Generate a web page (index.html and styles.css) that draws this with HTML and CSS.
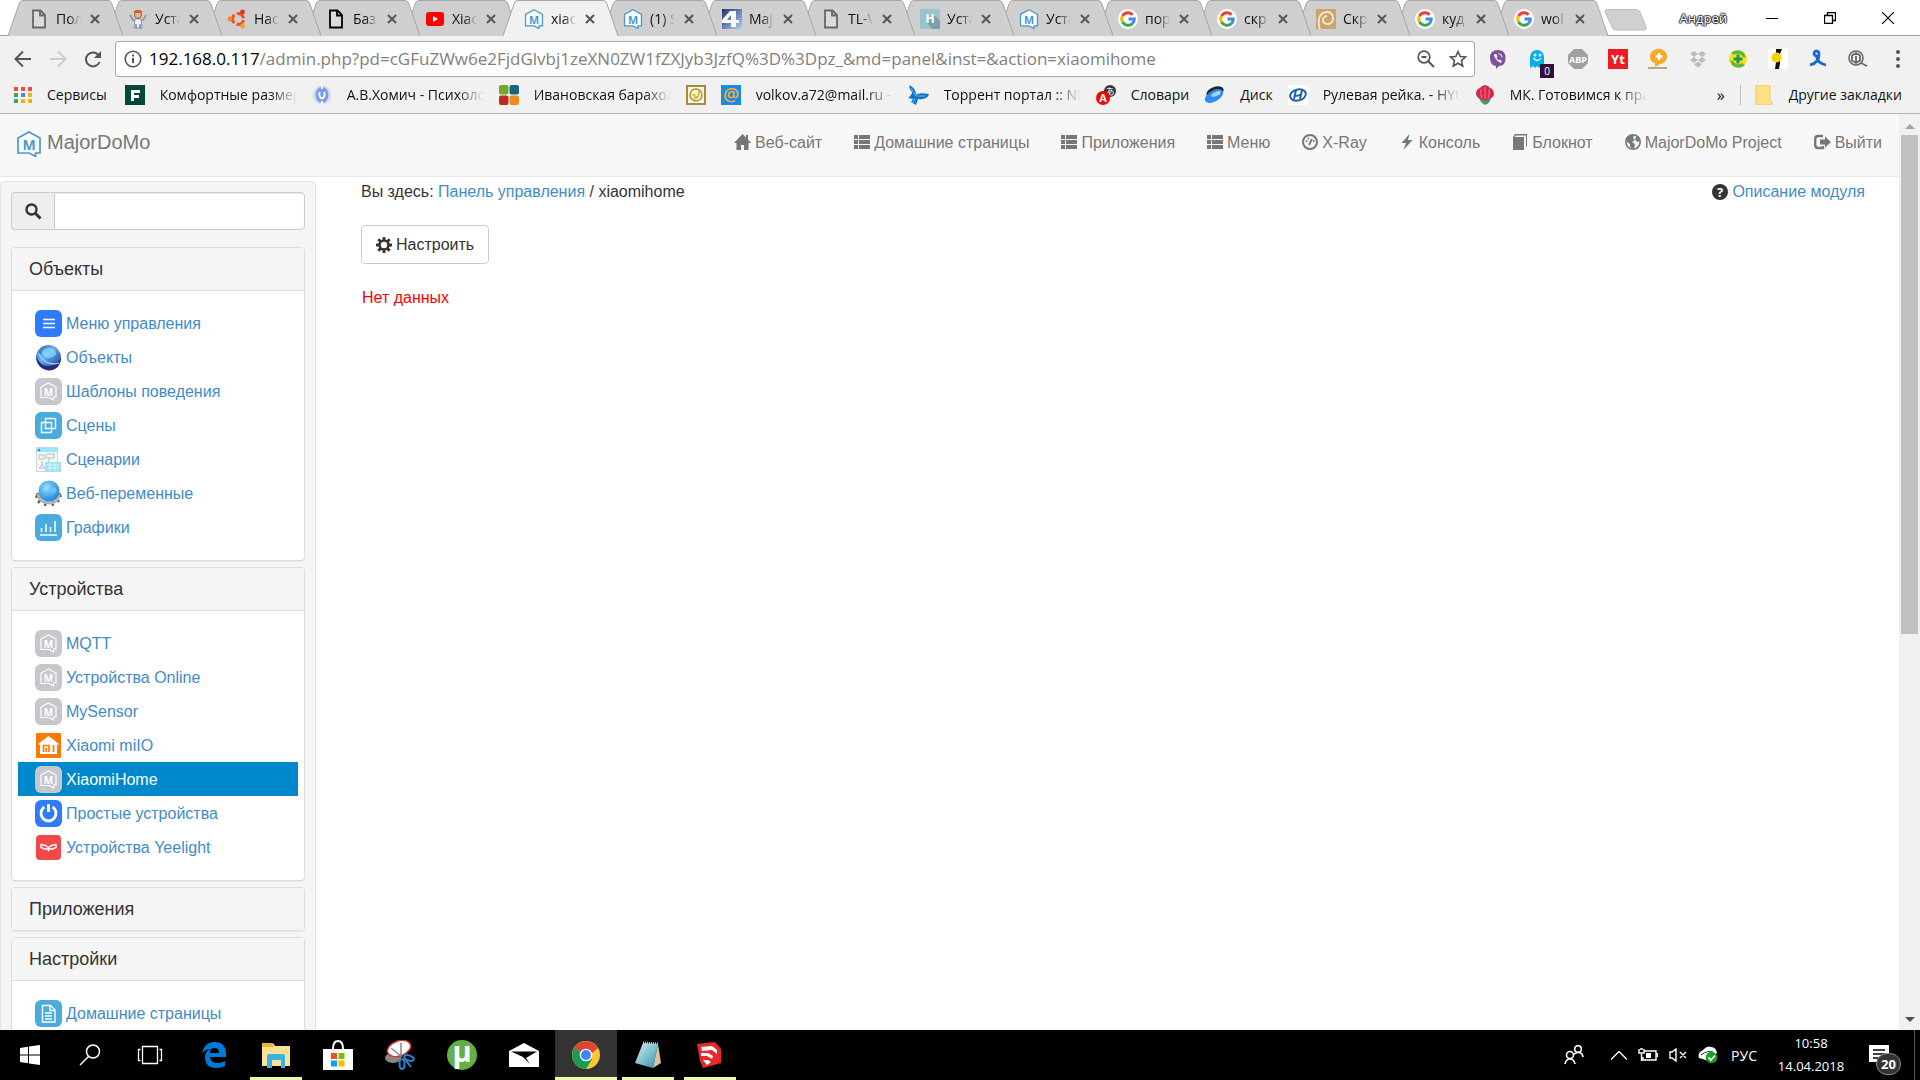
FILE: index.html
```html
<!DOCTYPE html>
<html lang="ru">
<head>
<meta charset="utf-8">
<title>xiaomihome</title>
<link rel="stylesheet" href="styles.css">
</head>
<body>
<svg class="defs" width="0" height="0" aria-hidden="true">
  <defs>
    <linearGradient id="g-ball" x1="0" y1="0" x2="1" y2="1"><stop offset="0" stop-color="#2a4fa0"/><stop offset=".4" stop-color="#5fb4f0"/><stop offset="1" stop-color="#1b2a8a"/></linearGradient>
    <radialGradient id="g-globe" cx=".4" cy=".35" r=".7"><stop offset="0" stop-color="#8fdcff"/><stop offset="1" stop-color="#1583dc"/></radialGradient>
    <linearGradient id="g-pad" x1="0" y1="0" x2="1" y2="1"><stop offset="0" stop-color="#d8f0f5"/><stop offset="1" stop-color="#2f93a8"/></linearGradient>
    <linearGradient id="g-four" x1="0" y1="0" x2="1" y2="1"><stop offset="0" stop-color="#1a3472"/><stop offset="1" stop-color="#b5d0f2"/></linearGradient>
  </defs>
  <symbol id="tab-shape" viewBox="0 0 115 36"><path d="M0 36 11 4Q12 .5 15 .5H100Q103 .5 104 4L115 36"/></symbol>
  <symbol id="cross" viewBox="0 0 10 10"><path d="M1 1l8 8M9 1L1 9" fill="none" stroke="currentColor" stroke-width="2"/></symbol>
  <symbol id="doc" viewBox="0 0 20 20"><path d="M4 1.500H11.500L16 6V18.500H4zM11 1.500V6.500H16" fill="#fff" fill-opacity=".25" stroke="currentColor" stroke-width="1.800"/></symbol>
  <symbol id="mdm" viewBox="0 0 24 26"><path d="M12 1 23 7V22H18.500V25.300L12 22H1V7Z" fill="#fff" stroke="#4a98d3" stroke-width="1.700"/><text x="12" y="19" text-anchor="middle" font-size="14" font-weight="700" fill="#4a98d3">M</text></symbol>
  <symbol id="mdm-tile" viewBox="0 0 27 27"><rect width="27" height="27" rx="6" fill="#c6c6cd"/><path d="M13.500 5 21 9V19H18.500V22L14 19.500H6V9Z" fill="none" stroke="#fff" stroke-width="1.200"/><text x="13.500" y="17.500" text-anchor="middle" font-size="10" font-weight="700" fill="#fff">M</text></symbol>
  <symbol id="google" viewBox="0 0 20 20"><circle cx="10" cy="10" r="10" fill="#fff"/><g fill="none" stroke-width="3"><path d="M14.600 5.700A6.300 6.300 0 0 0 4.500 7" stroke="#ea4335"/><path d="M4.500 7A6.300 6.300 0 0 0 4.500 13" stroke="#fbbc05"/><path d="M4.500 13A6.300 6.300 0 0 0 14.300 14.600" stroke="#34a853"/><path d="M14.300 14.600A6.300 6.300 0 0 0 16.300 10H10.500" stroke="#4285f4"/></g></symbol>
  <symbol id="man" viewBox="0 0 20 20"><path d="M2 6l3 5 3 1M18 6l-3 5-3 1" stroke="#8f9aa8" stroke-width="1.800" fill="none"/><path d="M7 10h6l1 9H6z" fill="#eef2f8" stroke="#7a86a8" stroke-width=".8"/><circle cx="10" cy="6" r="3.500" fill="#e9b38c" stroke="#7a4a32" stroke-width=".8"/><path d="M5 3l3-2 4 0 3 2-2 1H7z" fill="#d2622a"/><path d="M8 19v-4M12 19v-4" stroke="#384f93"/></symbol>
  <symbol id="ubuntu" viewBox="0 0 20 20"><circle cx="11" cy="10" r="5.500" fill="none" stroke="#e95420" stroke-width="3" stroke-dasharray="9 2.500" stroke-dashoffset="-1"/><circle cx="3" cy="10" r="2.400" fill="#ef8b26"/><circle cx="15.500" cy="3" r="2.400" fill="#d93a1d"/><circle cx="15.500" cy="17" r="2.400" fill="#f0a030"/></symbol>
  <symbol id="youtube" viewBox="0 0 20 20"><rect x="1" y="3" width="18" height="14" rx="3" fill="#f00"/><path d="M8 7v6l5-3z" fill="#fff"/></symbol>
  <symbol id="four" viewBox="0 0 20 20"><rect width="20" height="20" fill="url(#g-four)"/><path d="M0 11 8 2h6v9h3v3h-3v4H9v-4H0zM9 6l-4 5h4z" fill="#fff"/></symbol>
  <symbol id="hab" viewBox="0 0 20 20"><rect width="20" height="20" fill="#9bc3cf"/><path d="M14 6l6 6v8H12L7 14z" fill="#7a9eaa"/><text x="10" y="14" text-anchor="middle" font-size="12" font-weight="700" fill="#fff">H</text></symbol>
  <symbol id="swirl" viewBox="0 0 20 20"><rect width="20" height="20" fill="#c9a46c"/><path d="M4 20C1 12 3 3 11 3s8 12 1 12-6-8-1-8" fill="none" stroke="#f7ead2" stroke-width="1.800"/></symbol>
  <symbol id="list" viewBox="0 0 16 16"><path d="M0 1h4v4H0zM5 1h11v4H5zM0 6h4v4H0zM5 6h11v4H5zM0 11h4v4H0zM5 11h11v4H5z" fill="currentColor"/></symbol>
</svg>

<header class="browser">
  <div class="tab-row">
    <nav class="tabs" aria-label="Вкладки">
      <div class="tab"><svg class="tab-bg"><use href="#tab-shape"/></svg><svg class="fav grey"><use href="#doc"/></svg><span class="tab-title">Пол</span><button class="tab-close" aria-label="Закрыть"><svg><use href="#cross"/></svg></button></div>
      <div class="tab"><svg class="tab-bg"><use href="#tab-shape"/></svg><svg class="fav"><use href="#man"/></svg><span class="tab-title">Уста</span><button class="tab-close" aria-label="Закрыть"><svg><use href="#cross"/></svg></button></div>
      <div class="tab"><svg class="tab-bg"><use href="#tab-shape"/></svg><svg class="fav"><use href="#ubuntu"/></svg><span class="tab-title">Нас</span><button class="tab-close" aria-label="Закрыть"><svg><use href="#cross"/></svg></button></div>
      <div class="tab"><svg class="tab-bg"><use href="#tab-shape"/></svg><svg class="fav solid"><use href="#doc"/></svg><span class="tab-title">Баз</span><button class="tab-close" aria-label="Закрыть"><svg><use href="#cross"/></svg></button></div>
      <div class="tab"><svg class="tab-bg"><use href="#tab-shape"/></svg><svg class="fav"><use href="#youtube"/></svg><span class="tab-title">Xiao</span><button class="tab-close" aria-label="Закрыть"><svg><use href="#cross"/></svg></button></div>
      <div class="tab active"><svg class="tab-bg"><use href="#tab-shape"/></svg><svg class="fav"><use href="#mdm"/></svg><span class="tab-title">xiao</span><button class="tab-close" aria-label="Закрыть"><svg><use href="#cross"/></svg></button></div>
      <div class="tab"><svg class="tab-bg"><use href="#tab-shape"/></svg><svg class="fav"><use href="#mdm"/></svg><span class="tab-title">(1) S</span><button class="tab-close" aria-label="Закрыть"><svg><use href="#cross"/></svg></button></div>
      <div class="tab"><svg class="tab-bg"><use href="#tab-shape"/></svg><svg class="fav"><use href="#four"/></svg><span class="tab-title">Maj</span><button class="tab-close" aria-label="Закрыть"><svg><use href="#cross"/></svg></button></div>
      <div class="tab"><svg class="tab-bg"><use href="#tab-shape"/></svg><svg class="fav grey"><use href="#doc"/></svg><span class="tab-title">TL-V</span><button class="tab-close" aria-label="Закрыть"><svg><use href="#cross"/></svg></button></div>
      <div class="tab"><svg class="tab-bg"><use href="#tab-shape"/></svg><svg class="fav"><use href="#hab"/></svg><span class="tab-title">Уста</span><button class="tab-close" aria-label="Закрыть"><svg><use href="#cross"/></svg></button></div>
      <div class="tab"><svg class="tab-bg"><use href="#tab-shape"/></svg><svg class="fav"><use href="#mdm"/></svg><span class="tab-title">Уста</span><button class="tab-close" aria-label="Закрыть"><svg><use href="#cross"/></svg></button></div>
      <div class="tab"><svg class="tab-bg"><use href="#tab-shape"/></svg><svg class="fav"><use href="#google"/></svg><span class="tab-title">пор</span><button class="tab-close" aria-label="Закрыть"><svg><use href="#cross"/></svg></button></div>
      <div class="tab"><svg class="tab-bg"><use href="#tab-shape"/></svg><svg class="fav"><use href="#google"/></svg><span class="tab-title">скр</span><button class="tab-close" aria-label="Закрыть"><svg><use href="#cross"/></svg></button></div>
      <div class="tab"><svg class="tab-bg"><use href="#tab-shape"/></svg><svg class="fav"><use href="#swirl"/></svg><span class="tab-title">Скр</span><button class="tab-close" aria-label="Закрыть"><svg><use href="#cross"/></svg></button></div>
      <div class="tab"><svg class="tab-bg"><use href="#tab-shape"/></svg><svg class="fav"><use href="#google"/></svg><span class="tab-title">куд</span><button class="tab-close" aria-label="Закрыть"><svg><use href="#cross"/></svg></button></div>
      <div class="tab"><svg class="tab-bg"><use href="#tab-shape"/></svg><svg class="fav"><use href="#google"/></svg><span class="tab-title">wol</span><button class="tab-close" aria-label="Закрыть"><svg><use href="#cross"/></svg></button></div>
    </nav>
    <button class="new-tab" aria-label="Новая вкладка"><svg width="44" height="22" viewBox="0 0 44 22"><path d="M4 .5H32Q35 .5 36 3L42 18Q43 21 40 21H12Q9 21 8 18L1 3Q.5 .5 4 .5z" fill="#d0d0d0" stroke="#bcbcbc"/></svg></button>
    <div class="window-controls">
      <span class="profile">Андрей</span>
      <button aria-label="Свернуть"><svg width="12" height="12"><path d="M0 6.500h12" stroke="#000"/></svg></button>
      <button aria-label="Развернуть"><svg width="12" height="12"><path d="M.5 3.500h8v8h-8zM3.500 3V.5h8v8H9" fill="none" stroke="#000" stroke-width="1.300"/></svg></button>
      <button aria-label="Закрыть окно"><svg width="12" height="12"><path d="M0 0l12 12M12 0L0 12" stroke="#000" stroke-width="1.200"/></svg></button>
    </div>
  </div>

  <div class="toolbar">
    <button class="tool" aria-label="Назад"><svg width="18" height="18"><path d="M17 9H2M9 1.500L1.500 9 9 16.500" fill="none" stroke="#555" stroke-width="2"/></svg></button>
    <button class="tool" aria-label="Вперёд"><svg width="18" height="18"><path d="M1 9h15M9 1.500L16.500 9 9 16.500" fill="none" stroke="#ccc" stroke-width="2"/></svg></button>
    <button class="tool" aria-label="Обновить"><svg width="18" height="18"><path d="M15.500 12A7 7 0 1 1 14 4.500" fill="none" stroke="#555" stroke-width="2"/><path d="M17 1v7h-7z" fill="#555"/></svg></button>
    <div class="omnibox">
      <svg width="18" height="18"><circle cx="9" cy="9" r="7.800" fill="none" stroke="#555" stroke-width="1.600"/><path d="M9 8v5M9 4.500v2" stroke="#555" stroke-width="2"/></svg>
      <label class="host" for="url">192.168.0.117</label>
      <input id="url" class="url" type="text" value="/admin.php?pd=cGFuZWw6e2FjdGlvbj1zeXN0ZW1fZXJyb3JzfQ%3D%3Dpz_&amp;md=panel&amp;inst=&amp;action=xiaomihome">
      <button aria-label="Масштаб"><svg width="18" height="18"><circle cx="7" cy="7" r="5.800" fill="none" stroke="#555" stroke-width="1.700"/><path d="M4.500 7h5M11 11l6 6" stroke="#555" stroke-width="2"/></svg></button>
      <button aria-label="Добавить в закладки"><svg width="18" height="18"><path d="M9 1.500l2.200 5 5.300.5-4 3.600 1.200 5.400L9 13.200 4.300 16l1.200-5.400-4-3.600 5.300-.5z" fill="none" stroke="#555" stroke-width="1.600"/></svg></button>
    </div>
    <div class="extensions">
      <button aria-label="Viber"><svg width="20" height="20"><path d="M10 1q7.500 0 7.500 8T11 17l-3 3v-3Q2 16 2 9q0-8 8-8z" fill="#7b519d"/><path d="M6.500 5q-1 1.500 1 4.500t5 4.500l1.500-1.500-2-2-1.200.8q-1.500-.8-2.300-2.600l1-1-1.300-2.700z" fill="#fff"/><path d="M10.500 4.500q3.500.5 3.500 4" fill="none" stroke="#fff"/></svg></button>
      <button class="ghost" aria-label="Ghostery"><svg width="20" height="20"><path d="M2 19V8a7 7 0 0 1 14 0v11l-3-2-2 2-2-2-2 2-2-2z" fill="#00aeef"/><circle cx="7" cy="6" r="1.500" fill="#fff"/><circle cx="12" cy="6" r="1.500" fill="#fff"/><path d="M5.500 9q4 5 7.500 0" stroke="#fff" fill="none" stroke-width="1.300"/></svg><span class="count">0</span></button>
      <button aria-label="Adblock Plus"><svg width="20" height="20"><path d="M6 0h8l6 6v8l-6 6H6l-6-6V6z" fill="#a0a0a0"/><text x="10" y="13.500" text-anchor="middle" font-size="9" font-weight="700" fill="#fff">ABP</text></svg></button>
      <button aria-label="Yt"><svg width="20" height="20"><path d="M0 0h20v20H0z" fill="#ed1c24"/><text x="10" y="15" text-anchor="middle" font-size="13" font-weight="700" fill="#fff">Yt</text></svg></button>
      <button aria-label="Сообщения"><svg width="20" height="20"><path d="M0 19h19" stroke="#b08b4e" stroke-width="1.500"/><path d="M10 0a8 7.500 0 0 1 2 15l-5 3 0-3.500A8 7.500 0 0 1 10 0z" fill="#fba92a"/><path d="M11 4v7M7.500 7.500h7" stroke="#fff" stroke-width="2.400"/></svg></button>
      <button aria-label="Dropbox"><svg width="20" height="20"><path d="M6 2l4 3-4 3-4-3zM14 2l4 3-4 3-4-3zM6 8l4 3-4 3-4-3zM14 8l4 3-4 3-4-3zM10 12.500l4 3-4 3-4-3z" fill="#bdbdbd"/></svg></button>
      <button aria-label="Savefrom"><svg width="20" height="20"><circle cx="10" cy="10" r="9" fill="#ffe11b"/><path d="M3 4a9 9 0 0 1 13 0l2 5-3-1a6 6 0 0 0-9-2zM17 16a9 9 0 0 1-13 0l-2-5 3 1a6 6 0 0 0 9 2z" fill="#58b947"/><path d="M10 5.500v9M5.500 10h9" stroke="#219653" stroke-width="3"/></svg></button>
      <button aria-label="Часы"><svg width="20" height="20"><path d="M0 0h20v20H0z" fill="#fff"/><path d="M8 0h6l-2 5v9l-1 6H7l1-7z" fill="#111"/><circle cx="8.500" cy="8.500" r="5" fill="#ffd000"/></svg></button>
      <button aria-label="Лента"><svg width="20" height="20"><path d="M2 16q9-2 9-11a2.500 2.500 0 1 0-2.500 2Q9 14 18 16" fill="none" stroke="#1769d2" stroke-width="2.800"/></svg></button>
      <button aria-label="Поиск"><svg width="20" height="20"><circle cx="8" cy="9" r="7" fill="none" stroke="#666" stroke-width="1.600"/><path d="M8 4l4 2.500v5L8 14l-4-2.500v-5zM8 7v7M13 14l6 3" fill="none" stroke="#666" stroke-width="1.800"/></svg></button>
      <button aria-label="Меню"><svg width="20" height="20"><circle cx="10" cy="3" r="2" fill="#555"/><circle cx="10" cy="10" r="2" fill="#555"/><circle cx="10" cy="17" r="2" fill="#555"/></svg></button>
    </div>
  </div>

  <nav class="bookmarks" aria-label="Закладки">
    <a href="#" class="apps"><svg width="18" height="20"><path d="M0 2h4v4H0z M7 2h4v4H7z M14 2h4v4h-4z" fill="#f04a43"/><path d="M0 8h4v4H0zM0 14h4v4H0z" fill="#3aa757"/><path d="M7 8h4v4H7z" fill="#4285f4"/><path d="M7 14h4v4H7zM14 8h4v4h-4zM14 14h4v4h-4z" fill="#f5b400"/></svg><span>Сервисы</span></a>
    <a href="#"><svg width="20" height="20"><path d="M0 0h20v20H0z" fill="#00493a"/><path d="M6 5h9v3H9v2h5v3H9v3H6z" fill="#fff"/></svg><span class="fade">Комфортные размеры</span></a>
    <a href="#"><svg width="20" height="20"><circle cx="10" cy="10" r="9.500" fill="#dcdcec"/><ellipse cx="10" cy="10" rx="6.500" ry="8" fill="#7b9ce8"/><path d="M10 0v4M10 16v4M7.500 7v4q2.500 5 5 0V7" stroke="#fff" fill="none" stroke-width="1.800"/></svg><span class="fade">А.В.Хомич - Психолог</span></a>
    <a href="#"><svg width="20" height="20"><rect width="9.500" height="9.500" rx="2" fill="#77a827"/><rect x="10.500" width="9.500" height="9.500" rx="2" fill="#17657f"/><rect y="10.500" width="9.500" height="9.500" rx="2" fill="#bc2a23"/><rect x="10.500" y="10.500" width="9.500" height="9.500" rx="2" fill="#ea8c15"/></svg><span class="fade">Ивановская барахолка</span></a>
    <a href="#" aria-label="Монета"><svg width="20" height="20"><path d="M1 1h18v18H1z" fill="#fff8e0" stroke="#a88a3c" stroke-width="2"/><circle cx="10" cy="10" r="6" fill="none" stroke="#ab924b" stroke-width="1.500"/><path d="M7 14q7-1 6-8M6 9l6 4" stroke="#e3bd25" stroke-width="2" fill="none"/></svg></a>
    <a href="#"><svg width="20" height="20"><path d="M0 0h20v20H0z" fill="#168de2"/><text x="10" y="16" text-anchor="middle" font-size="18" font-weight="600" fill="#ffa930">@</text></svg><span class="fade">volkov.a72@mail.ru - Почта</span></a>
    <a href="#"><svg width="21" height="20"><path d="M1 0q7 3 7 10Q10 7 21 9q-1 6-11 5l-2 6-5-3 2-3-5-1q4-3 4-6-3-3-3-7z" fill="#1373ca"/><path d="M3 3l5 8 9 0M7 13l-2 5" stroke="#40c8f4" fill="none"/></svg><span class="fade">Торрент портал :: NNM</span></a>
    <a href="#"><svg width="20" height="20"><circle cx="14" cy="6" r="6" fill="#333"/><text x="14" y="10" text-anchor="middle" font-size="9" fill="#fff">あ</text><circle cx="7" cy="13" r="7" fill="#f00"/><text x="7" y="17" text-anchor="middle" font-size="11" font-weight="700" fill="#fff">A</text></svg><span>Словари</span></a>
    <a href="#"><svg width="21" height="20"><ellipse cx="11" cy="7" rx="9" ry="5" transform="rotate(-20 11 7)" fill="#222"/><ellipse cx="10" cy="11" rx="10" ry="5.500" transform="rotate(-30 10 11)" fill="#2c8cf4"/><ellipse cx="12" cy="9" rx="5" ry="2" transform="rotate(-25 12 9)" fill="#a6d6ff"/></svg><span>Диск</span></a>
    <a href="#"><svg width="20" height="20"><path d="M0 0h20v20H0z" fill="#fff"/><ellipse cx="10" cy="10" rx="8" ry="5.500" transform="rotate(-15 10 10)" fill="none" stroke="#1f62a8" stroke-width="2"/><path d="M8 5l-2 9M14 5l-2 9M6.500 11q4 0 7-2" fill="none" stroke="#1f62a8" stroke-width="2"/></svg><span class="fade">Рулевая рейка. - HYUN</span></a>
    <a href="#"><svg width="20" height="20"><path d="M4 11h12q0 7-6 9-6-3-6-9z" fill="#459675"/><path d="M10 0q4 1 5 3 4 1 4 7-2 4-6 4l-3 2-3-2q-5 0-6-5 0-5 4-6 1-2 5-3z" fill="#d5284b"/><path d="M6 4q-1 5 1 9M10 2v12M14 4q1 5-1 9" stroke="#e87a8c" fill="none"/></svg><span class="fade">МК. Готовимся к празднику</span></a>
    <button class="more" aria-label="Ещё закладки">»</button>
    <a href="#" class="other"><svg width="20" height="20"><path d="M2 0h14v16l2 1v3H2z" fill="#ffe082" stroke="#ecca63"/></svg><span>Другие закладки</span></a>
  </nav>
</header>

<div class="viewport">
  <div class="page">
    <header class="site-header">
      <a class="brand" href="#"><svg width="24" height="26"><use href="#mdm"/></svg>MajorDoMo</a>
      <nav class="site-nav">
        <a href="#"><svg width="17" height="16" viewBox="0 0 17 16"><path d="M8.500 0l3.500 3.500V1h2v4.500l3 3.500h-2.500v7H10v-5H7v5H2.500V9H0z" fill="currentColor"/></svg>Веб-сайт</a>
        <a href="#"><svg width="16" height="16"><use href="#list"/></svg>Домашние страницы</a>
        <a href="#"><svg width="16" height="16"><use href="#list"/></svg>Приложения</a>
        <a href="#"><svg width="16" height="16"><use href="#list"/></svg>Меню</a>
        <a href="#"><svg width="16" height="16"><circle cx="8" cy="8" r="7" fill="none" stroke="currentColor" stroke-width="2"/><path d="M7 11l3-6" stroke="currentColor" stroke-width="1.800"/><circle cx="4.500" cy="7" r="1" fill="currentColor"/><circle cx="6.500" cy="4.500" r="1" fill="currentColor"/><circle cx="11.800" cy="7" r="1" fill="currentColor"/></svg>X-Ray</a>
        <a href="#"><svg width="16" height="16"><path d="M10.500 0L2.500 9H7l-2.500 7L13.500 6H9z" fill="currentColor"/></svg>Консоль</a>
        <a href="#"><svg width="16" height="16"><path d="M1 3l2-3h12v12l-1 1V1.500H4L2.500 3H12v13H1z" fill="currentColor"/></svg>Блокнот</a>
        <a href="#"><svg width="16" height="16"><circle cx="8" cy="8" r="7.200" fill="none" stroke="currentColor" stroke-width="1.600"/><path d="M1 5l4-4 4 0-1 3 2 2-3 2 3 2-1 5-4-2 0-3-3-2zM12 2l3 5-3 1-2-3z" fill="currentColor"/></svg>MajorDoMo Project</a>
        <a href="#"><svg width="17" height="16"><path d="M9 2H4Q1.200 2 1.200 5v6q0 3 2.800 3h5v-2" fill="none" stroke="currentColor" stroke-width="2.400"/><path d="M6 5.500h5V2.500L17 8l-6 5.500v-3H6z" fill="currentColor"/></svg>Выйти</a>
      </nav>
    </header>

    <div class="layout">
      <aside class="sidebar">
        <form class="search">
          <label for="q" aria-label="Поиск"><svg width="17" height="17"><circle cx="6.500" cy="6.500" r="5" fill="none" stroke="#333" stroke-width="2.400"/><path d="M10.500 10.500l5 5" stroke="#333" stroke-width="3"/></svg></label>
          <input id="q" type="text">
        </form>

        <section class="panel">
          <h2>Объекты</h2>
          <ul>
            <li><a href="#"><svg><rect width="27" height="27" rx="6" fill="#2f7bff"/><path d="M8 9.500h12M8 13.500h12M8 17.500h12" stroke="#fff" stroke-width="1.400"/></svg>Меню управления</a></li>
            <li><a href="#"><svg><circle cx="13.500" cy="13.500" r="12.500" fill="url(#g-ball)"/><path d="M1 12q4 10 12 10t13-8q-1 12-12 12.500Q2 25 1 12z" fill="#252c7c"/><path d="M3 9q8 14 21 10" stroke="#b9d2f5" stroke-width="1.200" fill="none"/><ellipse cx="14" cy="9" rx="7" ry="5" fill="#8bdcff" opacity=".7"/></svg>Объекты</a></li>
            <li><a href="#"><svg><use href="#mdm-tile"/></svg>Шаблоны поведения</a></li>
            <li><a href="#"><svg><rect width="27" height="27" rx="6" fill="#4aabdf"/><path d="M10.500 6.500h10v10h-10zM6.500 10.500h10v10h-10z" fill="none" stroke="#fff" stroke-width="1.400"/></svg>Сцены</a></li>
            <li><a href="#"><svg><path d="M1.500 1.500h21v24h-21z" fill="#f3f6f6" stroke="#ccd8d8"/><path d="M2 2h20v4H2z" fill="#9be6f7"/><circle cx="4" cy="4" r="1.300" fill="#3a97b8"/><path d="M4 9h5v4H4zM11 8h8v4h-8zM7 15v4l-3 3h6l-3-3M14 12v4" fill="none" stroke="#b9c2c2"/><path d="M10 16h16v10H10z" fill="#9de2f5"/><path d="M12 19h12M12 22h12M15 17v8M20 17v8" stroke="#d8f6fc"/></svg>Сценарии</a></li>
            <li><a href="#"><svg><path d="M3 13l-2 5M6 19l-3 4M11 21l-1 5M17 21l1 5M21 18l3 4M24 13l2 4" stroke="#666" stroke-width="2.500"/><path d="M3 14q2 9 11 9t10-9" fill="none" stroke="#b3b3b3" stroke-width="3"/><circle cx="14" cy="11" r="10.500" fill="url(#g-globe)"/><path d="M10 4l5 1-2 5-5 1zM16 10l4-3 2 4-4 3z" fill="#a1dcff" opacity=".4"/></svg>Веб-переменные</a></li>
            <li><a href="#"><svg><rect width="27" height="27" rx="6" fill="#4aabdf"/><path d="M5 21h17M6.500 18v-4M11 18v-8M15.500 18v-5M20 18V7" stroke="#fff" stroke-width="1.500"/></svg>Графики</a></li>
          </ul>
        </section>

        <section class="panel">
          <h2>Устройства</h2>
          <ul>
            <li><a href="#"><svg><use href="#mdm-tile"/></svg>MQTT</a></li>
            <li><a href="#"><svg><use href="#mdm-tile"/></svg>Устройства Online</a></li>
            <li><a href="#"><svg><use href="#mdm-tile"/></svg>MySensor</a></li>
            <li><a href="#"><svg><rect x="1" y="1" width="25" height="25" rx="1" fill="#ff7800"/><path d="M13.500 4L24 12l-2 1v9H5v-9l-2-1z" fill="#fff"/><path d="M8.500 20v-6.500h5.500V20M11.200 20v-4M18.500 20v-7" fill="none" stroke="#ff7800" stroke-width="1.700"/></svg>Xiaomi miIO</a></li>
            <li><a href="#" class="current"><svg><use href="#mdm-tile"/></svg>XiaomiHome</a></li>
            <li><a href="#"><svg><rect width="27" height="27" rx="6" fill="#2f7bff"/><path d="M9.500 7a7.500 7.500 0 1 0 8 0M13.500 4v8" fill="none" stroke="#fff" stroke-width="2.800"/></svg>Простые устройства</a></li>
            <li><a href="#"><svg><rect x="1" y="1" width="25" height="25" rx="4" fill="#f34849"/><path d="M6 10.500q4 0 7.500 3 3.500-3 7.500-3v3l-3.500 1.500H9.500L6 13.500zM13.500 13.500v4" fill="none" stroke="#fff" stroke-width="1.500"/></svg>Устройства Yeelight</a></li>
          </ul>
        </section>

        <section class="panel"><h2>Приложения</h2></section>

        <section class="panel">
          <h2>Настройки</h2>
          <ul>
            <li><a href="#"><svg><rect width="27" height="27" rx="6" fill="#4aabdf"/><path d="M7.500 5.500h8l4.500 4.500v12H7.500zM15 5.500V10.500h5M10 13h7M10 16h7M10 19h7" fill="none" stroke="#fff" stroke-width="1.400"/></svg>Домашние страницы</a></li>
          </ul>
        </section>
      </aside>

      <main class="content">
        <div class="crumbs">
          <p>Вы здесь: <a href="#">Панель управления</a> / xiaomihome</p>
          <a class="help" href="#"><svg width="16" height="16"><circle cx="8" cy="8" r="8" fill="#333"/><text x="8" y="13" text-anchor="middle" font-size="13" font-weight="700" fill="#fff">?</text></svg>Описание модуля</a>
        </div>
        <button class="btn"><svg width="16" height="16"><path d="M8 0v16M0 8h16M2.300 2.300l11.400 11.400M13.700 2.300L2.300 13.700" stroke="#333" stroke-width="2.800"/><circle cx="8" cy="8" r="4.500" fill="#fff" stroke="#333" stroke-width="2.600"/></svg>Настроить</button>
        <p class="empty">Нет данных</p>
      </main>
    </div>
  </div>

  <div class="scrollbar" aria-hidden="true">
    <svg width="10" height="5"><path d="M0 5l5-5 5 5z" fill="#a3a3a3"/></svg>
    <div class="track"><div class="thumb"></div></div>
    <svg width="10" height="5"><path d="M0 0l5 5 5-5z" fill="#505050"/></svg>
  </div>
</div>

<footer class="taskbar">
  <button class="sys" aria-label="Пуск"><svg width="20" height="20"><path d="M0 3l8-1.200V9.500H0zM9 1.600L20 0v9.500H9zM0 10.500h8v7.800L0 17zM9 10.500h11V20L9 18.500z" fill="#fff"/></svg></button>
  <button class="sys" aria-label="Поиск Windows"><svg width="22" height="22"><circle cx="14" cy="7.500" r="6.500" fill="none" stroke="#fff" stroke-width="1.500"/><path d="M9.500 12.500L1 21" stroke="#fff" stroke-width="1.500"/></svg></button>
  <button class="sys" aria-label="Представление задач"><svg width="26" height="20"><path d="M5.500 1.500h15v17h-15zM3.500 4.500h-2v11h2M22.500 4.500h2v11h-2" fill="none" stroke="#fff" stroke-width="1.300"/></svg></button>
  <div class="apps-row">
    <button class="app" aria-label="Edge"><svg width="28" height="28"><path d="M2 13Q4 1 14.500 1 26 1 26 13v3H10q1 6 7 6 5 0 8-2v5q-4 2-9 2-11 0-11-11 0-5 5-8-7 1-8 5zm8-1h9q0-5-4.500-5T10 12z" fill="#0078d7"/></svg></button>
    <button class="app open" aria-label="Проводник"><svg width="28" height="26"><path d="M0 1h11l2 3h15v20H0z" fill="#ffe294"/><path d="M0 1h11v4H0z" fill="#e9b62f"/><path d="M5 14q0-2 2-2h14q2 0 2 2v12h-4v-8h-9v8H5z" fill="#38b3e6"/></svg></button>
    <button class="app" aria-label="Store"><svg width="30" height="30"><path d="M0 9h30v21H0z" fill="#fff"/><path d="M10 9q0-8 5-8t5 8" fill="none" stroke="#fff" stroke-width="2"/><path d="M8 13h6v6H8z" fill="#f25022"/><path d="M15.500 13h6v6h-6z" fill="#7fba00"/><path d="M8 20.500h6v6H8z" fill="#00a4ef"/><path d="M15.500 20.500h6v6h-6z" fill="#ffb900"/></svg></button>
    <button class="app" aria-label="Ножницы"><svg width="30" height="30"><ellipse cx="8" cy="18" rx="8" ry="5" fill="#888"/><ellipse cx="14" cy="8.500" rx="12" ry="7.500" transform="rotate(-20 14 8.500)" fill="#fff" stroke="#d93434" stroke-width="1.500"/><path d="M6 8l11 9M16 3v13" stroke="#888" stroke-width="1.500"/><ellipse cx="24" cy="18" rx="5" ry="2.500" transform="rotate(20 24 18)" fill="none" stroke="#2187cf" stroke-width="2"/><ellipse cx="17" cy="24" rx="2.500" ry="5" fill="none" stroke="#2187cf" stroke-width="2"/><path d="M19 18l7 9" stroke="#2187cf" stroke-width="2"/></svg></button>
    <button class="app" aria-label="uTorrent"><svg width="30" height="30"><circle cx="15" cy="15" r="15" fill="#62b046"/><text x="15" y="22" text-anchor="middle" font-size="29" font-weight="700" fill="#fff">µ</text></svg></button>
    <button class="app" aria-label="Почта"><svg width="30" height="24"><path d="M0 8L15 0l15 8v16H0z" fill="#fff"/><path d="M2 8.500h26L17 15l4 6-7-7z" fill="#000"/></svg></button>
    <button class="app open focused" aria-label="Chrome"><svg width="28" height="28"><circle cx="14" cy="14" r="14" fill="#fcc934"/><path d="M14 14L2 7A14 14 0 0 1 26 7z" fill="#db4437"/><path d="M2 7A14 14 0 0 0 14 28l6-10-6-4z" fill="#159c58"/><path d="M14 7h12l-6 5z" fill="#db4437"/><circle cx="14" cy="14" r="6.300" fill="#fff"/><circle cx="14" cy="14" r="5" fill="#4285f4"/></svg></button>
    <button class="app open" aria-label="Блокнот Windows"><svg width="28" height="28"><path d="M9 2l15 1-5 24-18-5z" fill="url(#g-pad)"/><path d="M24 3l3 19-8 5z" fill="#d8c4a0"/><path d="M9 2l15 1" stroke="#ccc" stroke-width="3" stroke-dasharray="1 1"/></svg></button>
    <button class="app open" aria-label="SketchUp"><svg width="28" height="28"><path d="M1 3L19 1l6 7v14L7 27 4 20z" fill="#e8292c"/><path d="M5 6l11-1 5 4v4l-5-4-10 1zM5 12l7 0 5 3-1 3-5-3H5zM7 19l5 0 3 2-4 3z" fill="#fff"/></svg></button>
  </div>
  <div class="tray">
    <svg width="20" height="20"><g fill="none" stroke="#fff" stroke-width="1.600"><circle cx="6" cy="10" r="3.500"/><path d="M1 19q1-5 5-5t5 5"/><circle cx="14" cy="4" r="3.300"/><path d="M10 9q8-4 9 3"/></g></svg>
    <svg class="chevron" width="16" height="9"><path d="M0 8.500l8-8 8 8" fill="none" stroke="#fff" stroke-width="1.400"/></svg>
    <svg width="20" height="14"><path d="M6 3h12v9H5V9M19.500 5v4M3.500 6v7M1 1v4h5V1M2 1h3" fill="none" stroke="#fff" stroke-width="1.400"/><path d="M8 5h5v5H8z" fill="#fff"/></svg>
    <svg width="18" height="14"><path d="M1 4h2l4-3v12l-4-3H1zM11 4l6 6M17 4l-6 6" fill="none" stroke="#fff" stroke-width="1.400"/></svg>
    <svg width="20" height="18"><path d="M1 12Q-1 7 5 4q4-5 8-3 5 0 6 6l-8 8z" fill="#fff"/><path d="M3 9q7-5 12-3" stroke="#333" fill="none"/><circle cx="13.500" cy="11.500" r="5.800" fill="#18a025"/><path d="M10.500 11.500l2.500 2.500 4-4.500" fill="none" stroke="#fff" stroke-width="1.800"/></svg>
    <span class="lang">РУС</span>
    <time class="clock" datetime="2018-04-14T10:58"><span>10:58</span><span>14.04.2018</span></time>
    <div class="notify"><svg width="20" height="20"><path d="M0 0h20v17h-3v3l-4-3H0z" fill="#fff"/><path d="M4 5h12M4 9h12M4 13h8" stroke="#000" stroke-width="1.300"/></svg><span>20</span></div>
    <div class="desktop-edge"></div>
  </div>
</footer>
</body>
</html>
```
FILE: styles.css
```css
* { box-sizing: border-box; }
html, body { height: 100%; }
body {
  margin: 0;
  display: flex;
  flex-direction: column;
  overflow: hidden;
  background: #fff;
  color: #333;
  font: 16px/23px "Liberation Sans", Arial, sans-serif;
}
svg { display: block; flex: none; }
svg text { font-family: "Open Sans", "Noto Sans CJK JP", sans-serif; }
button { padding: 0; border: 0; background: none; font: inherit; color: inherit; }
a { color: #428bca; text-decoration: none; }
p, h2, ul { margin: 0; padding: 0; }
ul { list-style: none; }
.defs { position: absolute; }

/* Browser frame */
.browser { flex: none; font: 14px/20px "Open Sans", sans-serif; color: #111; }
.tab-row { display: flex; height: 35px; padding-left: 8px; }
.tabs { display: flex; }
.tab {
  position: relative;
  display: flex;
  align-items: center;
  width: 115px;
  height: 35px;
  margin-right: -16px;
  padding: 3px 0 0 21px;
}
.tab-bg { position: absolute; left: 0; top: 0; width: 115px; height: 36px; fill: #cfcfcf; stroke: #a6a6a6; z-index: -1; }
.tab:nth-child(1) { z-index: 16; }
.tab:nth-child(2) { z-index: 15; }
.tab:nth-child(3) { z-index: 14; }
.tab:nth-child(4) { z-index: 13; }
.tab:nth-child(5) { z-index: 12; }
.tab:nth-child(7) { z-index: 10; }
.tab:nth-child(8) { z-index: 9; }
.tab:nth-child(9) { z-index: 8; }
.tab:nth-child(10) { z-index: 7; }
.tab:nth-child(11) { z-index: 6; }
.tab:nth-child(12) { z-index: 5; }
.tab:nth-child(13) { z-index: 4; }
.tab:nth-child(14) { z-index: 3; }
.tab:nth-child(15) { z-index: 2; }
.tab:nth-child(16) { z-index: 1; }
.tab.active { z-index: 20; }
.tab.active .tab-bg { fill: #f1f1f1; }
.fav { width: 20px; height: 20px; margin-right: 7px; color: #666; }
.fav.solid { color: #000; }
.tab-title {
  width: 25px;
  margin-right: 9px;
  overflow: hidden;
  white-space: nowrap;
  -webkit-mask-image: linear-gradient(90deg, #000 50%, transparent);
  mask-image: linear-gradient(90deg, #000 50%, transparent);
}
.tab-close { width: 10px; height: 10px; color: #555; }
.tab-close svg { width: 10px; height: 10px; }
.new-tab { align-self: center; margin: 4px 0 0 12px; }
.window-controls { display: flex; align-items: center; gap: 46px; margin-left: auto; padding-right: 26px; }
.profile {
  margin-right: -7px;
  font-size: 13px;
  color: #fff;
  text-shadow: 1px 0 1px #222, -1px 0 1px #222, 0 1px 1px #222, 0 -1px 1px #222;
}

.toolbar {
  display: flex;
  align-items: center;
  height: 42px;
  padding: 5px 12px 0 14px;
  border-top: 1px solid #a3a3a3;
  background: #f1f1f1;
}
.tool { margin-right: 17px; }
.tool:nth-child(3) { margin-right: 13px; }
.omnibox {
  display: flex;
  align-items: center;
  flex: 1;
  height: 36px;
  padding: 0 7px 0 8px;
  border: 1px solid #a9a9a9;
  border-radius: 3px;
  background: #fff;
  font-size: 17px;
}
.host { margin-left: 7px; color: #000; }
.url { flex: 1; min-width: 0; padding: 0; border: 0; outline: 0; font: inherit; color: #808080; background: none; }
.omnibox button { margin-left: 14px; }
.extensions { display: flex; gap: 20px; margin-left: 13px; }
.ghost { position: relative; }
.count {
  position: absolute;
  left: 12px;
  top: 15px;
  width: 14px;
  height: 14px;
  background: #301038;
  color: #fff;
  font-size: 10px;
  line-height: 14px;
}

.bookmarks {
  display: flex;
  align-items: center;
  gap: 15px;
  height: 37px;
  padding: 0 18px 0 14px;
  border-bottom: 1px solid #b3b3b3;
  background: #f1f1f1;
}
.bookmarks a { display: flex; align-items: center; gap: 15px; color: #111; white-space: nowrap; }
.bookmarks .apps { margin-right: 3px; }
.fade {
  width: 137px;
  overflow: hidden;
  -webkit-mask-image: linear-gradient(90deg, #000 80%, transparent);
  mask-image: linear-gradient(90deg, #000 80%, transparent);
}
.more { margin-left: auto; font-size: 16px; }
.bookmarks .other { padding-left: 13px; border-left: 1px solid #c4c4c4; }

/* Page */
.viewport { display: flex; flex: 1; min-height: 0; }
.page { flex: 1; min-width: 0; overflow: hidden; }
.site-header {
  display: flex;
  align-items: center;
  justify-content: space-between;
  height: 63px;
  padding: 0 1px 6px 17px;
  border-bottom: 1px solid #e7e7e7;
  background: #f8f8f8;
}
.brand { display: flex; align-items: center; gap: 6px; font-size: 20px; color: #777; }
.brand svg { margin-top: 4px; }
.site-nav { display: flex; }
.site-nav a { display: flex; align-items: center; gap: 4px; padding: 0 16px; color: #777; white-space: nowrap; }

.layout { display: flex; align-items: flex-start; }
.sidebar {
  flex: 0 0 316px;
  margin-top: 4px;
  padding: 10px;
  border: 1px solid #e3e3e3;
  border-radius: 4px;
  background: #f5f5f5;
}
.search { display: flex; height: 38px; margin-bottom: 17px; }
.search label {
  display: flex;
  align-items: center;
  justify-content: center;
  width: 43px;
  border: 1px solid #ccc;
  border-right: 0;
  border-radius: 4px 0 0 4px;
  background: #eee;
}
.search input {
  flex: 1;
  min-width: 0;
  border: 1px solid #ccc;
  border-radius: 0 4px 4px 0;
  background: #fff;
  box-shadow: inset 0 1px 1px rgba(0, 0, 0, .075);
}
.panel {
  margin-bottom: 6px;
  border: 1px solid #ddd;
  border-radius: 4px;
  background: #fff;
  box-shadow: 0 1px 1px rgba(0, 0, 0, .05);
}
.panel h2 { padding: 0 17px; font-size: 18px; font-weight: 400; line-height: 42px; background: #f5f5f5; }
.panel ul { padding: 15px 6px 16px; border-top: 1px solid #ddd; }
.panel li a { display: flex; align-items: center; gap: 4px; height: 34px; padding-left: 17px; }
.panel li svg { width: 27px; height: 27px; }
.panel .current { background: #08c; color: #fff; }

.content { flex: 1; padding: 3px 34px 0 45px; }
.crumbs { display: flex; justify-content: space-between; margin-bottom: 22px; }
.help { display: flex; align-items: center; gap: 4px; }
.btn {
  display: flex;
  align-items: center;
  gap: 4px;
  height: 39px;
  padding: 0 14px;
  border: 1px solid #ccc;
  border-radius: 4px;
  background: #fff;
}
.empty { margin-top: 22px; padding-left: 1px; color: #f00; }

.scrollbar {
  display: flex;
  flex-direction: column;
  align-items: center;
  width: 21px;
  padding: 10px 0 8px;
  background: #f1f1f1;
}
.track { flex: 1; width: 17px; padding: 6px 0; }
.thumb { height: 57%; background: #c1c1c1; }

/* Taskbar */
.taskbar { display: flex; flex: none; height: 50px; background: #000; color: #fff; font: 14px/23px "Open Sans", sans-serif; }
.sys, .app { display: flex; align-items: center; justify-content: center; width: 60px; }
.apps-row { display: flex; margin-left: 3px; }
.app { width: 62px; }
.open { background: linear-gradient(#e9fba9, #e9fba9) center bottom / 52px 3px no-repeat; }
.focused { background: linear-gradient(#e9fba9, #e9fba9) center bottom / 100% 3px no-repeat #333; }
.tray { display: flex; align-items: center; margin-left: auto; gap: 11px; }
.chevron { margin-left: 16px; }
.lang { margin-left: 2px; }
.clock { display: flex; flex-direction: column; width: 86px; text-align: center; font-size: 13px; }
.notify { position: relative; margin: 0 14px 0 4px; }
.notify span {
  position: absolute;
  left: 7px;
  top: 8px;
  width: 25px;
  height: 22px;
  border: 1px solid #888;
  border-radius: 11px;
  background: #333;
  font-size: 13px;
  font-weight: 700;
  line-height: 20px;
  text-align: center;
}
.desktop-edge { width: 6px; height: 50px; border-left: 1px solid #555; }
```
